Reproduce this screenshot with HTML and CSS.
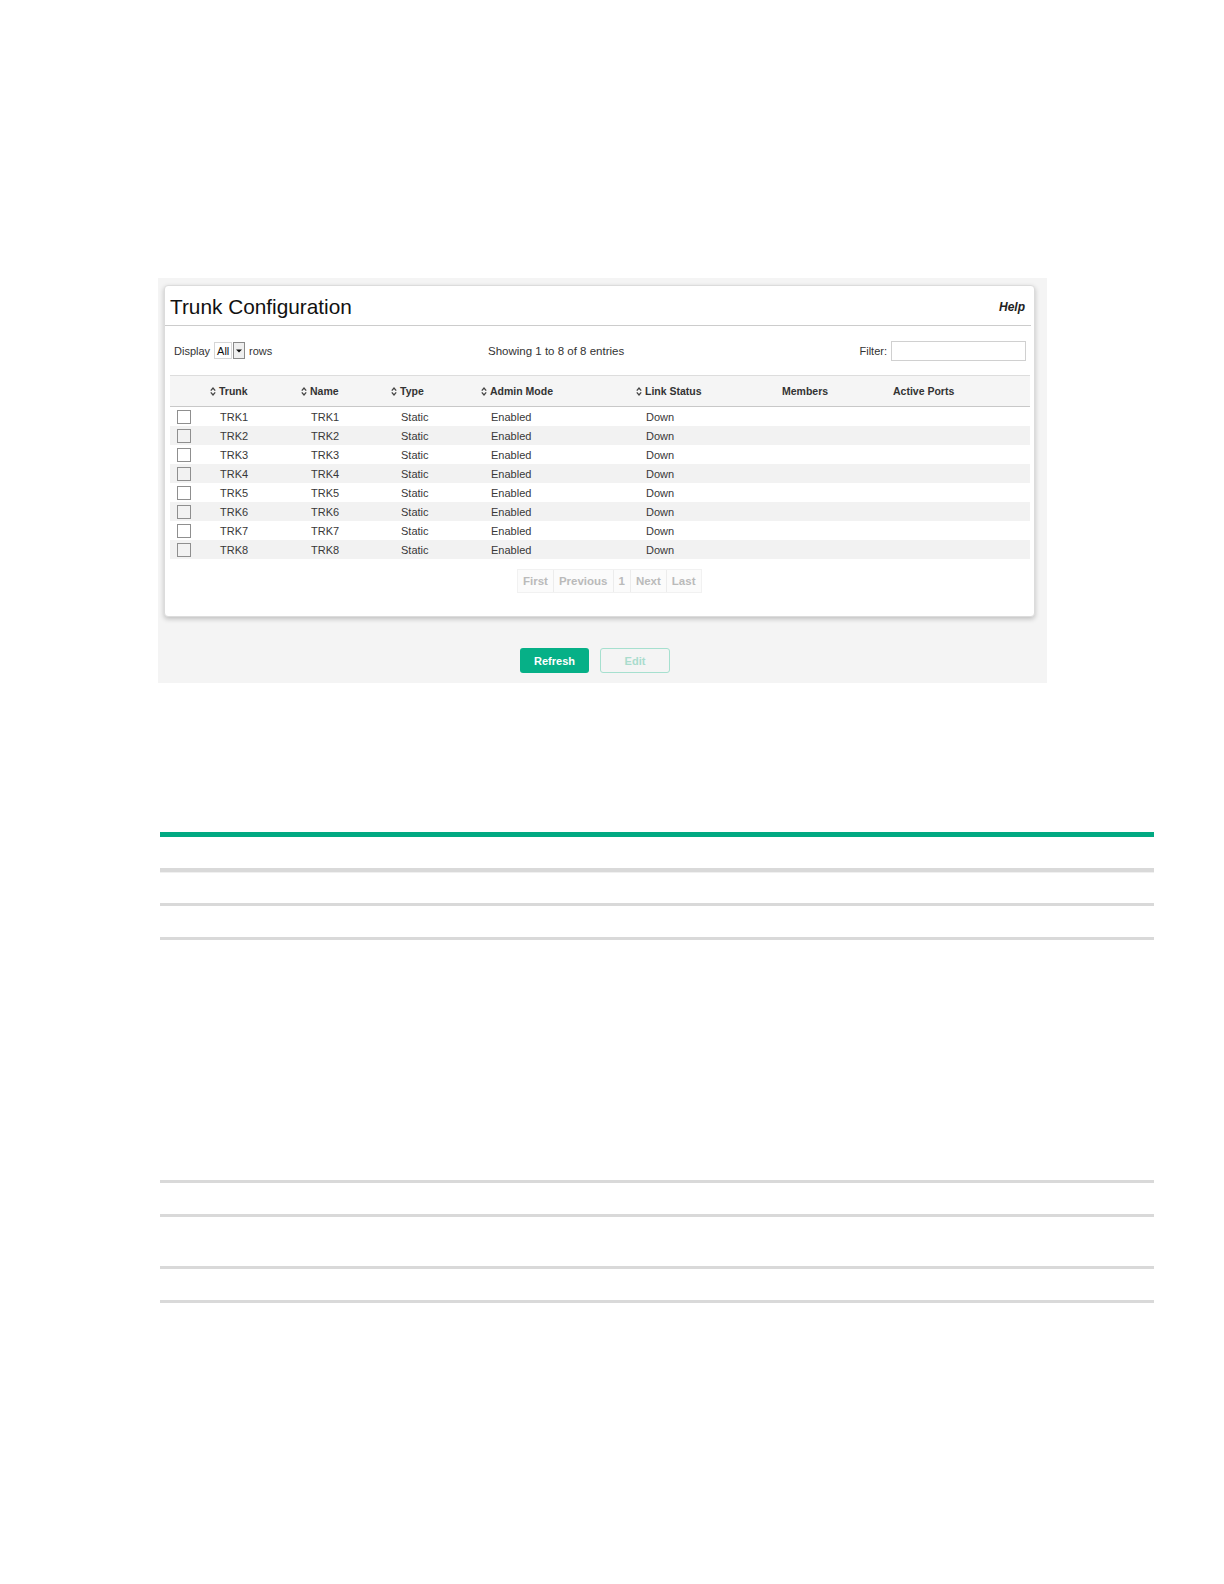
FILE: index.html
```html
<!DOCTYPE html>
<html lang="en">
<head>
<meta charset="utf-8">
<title>Trunk Configuration</title>
<link rel="stylesheet" href="styles.css">
</head>
<body>
<div class="page">
  <div class="frame">
    <div class="panel">
      <div class="titlebar">
        <span class="title">Trunk Configuration</span>
        <span class="help">Help</span>
      </div>
      <div class="toolbar">
        <div class="display">
          <span>Display</span>
          <span class="select"><span class="select-val">All</span><span class="select-arrow"><svg width="6" height="4" viewBox="0 0 6 4"><path d="M0 0.5 H6 L3 3.5 Z" fill="#111"/></svg></span></span>
          <span>rows</span>
        </div>
        <div class="showing">Showing 1 to 8 of 8 entries</div>
        <div class="filter"><span>Filter:</span><span class="filter-input"></span></div>
      </div>
      <div class="table">
        <div class="row head">
          <div class="cell"></div>
          <div class="cell sort"><svg class="sorticon" width="6" height="9" viewBox="0 0 6 9"><path d="M0.8 3.6 L3 1.1 L5.2 3.6 M0.8 5.4 L3 7.9 L5.2 5.4" fill="none" stroke="#444" stroke-width="1.3"/></svg>Trunk</div>
          <div class="cell sort"><svg class="sorticon" width="6" height="9" viewBox="0 0 6 9"><path d="M0.8 3.6 L3 1.1 L5.2 3.6 M0.8 5.4 L3 7.9 L5.2 5.4" fill="none" stroke="#444" stroke-width="1.3"/></svg>Name</div>
          <div class="cell sort"><svg class="sorticon" width="6" height="9" viewBox="0 0 6 9"><path d="M0.8 3.6 L3 1.1 L5.2 3.6 M0.8 5.4 L3 7.9 L5.2 5.4" fill="none" stroke="#444" stroke-width="1.3"/></svg>Type</div>
          <div class="cell sort"><svg class="sorticon" width="6" height="9" viewBox="0 0 6 9"><path d="M0.8 3.6 L3 1.1 L5.2 3.6 M0.8 5.4 L3 7.9 L5.2 5.4" fill="none" stroke="#444" stroke-width="1.3"/></svg>Admin Mode</div>
          <div class="cell sort"><svg class="sorticon" width="6" height="9" viewBox="0 0 6 9"><path d="M0.8 3.6 L3 1.1 L5.2 3.6 M0.8 5.4 L3 7.9 L5.2 5.4" fill="none" stroke="#444" stroke-width="1.3"/></svg>Link Status</div>
          <div class="cell plain">Members</div>
          <div class="cell plain">Active Ports</div>
        </div>
        <div class="row"><div class="cell chk"><span class="box"></span></div><div class="cell">TRK1</div><div class="cell">TRK1</div><div class="cell">Static</div><div class="cell">Enabled</div><div class="cell">Down</div><div class="cell"></div><div class="cell"></div></div>
        <div class="row"><div class="cell chk"><span class="box"></span></div><div class="cell">TRK2</div><div class="cell">TRK2</div><div class="cell">Static</div><div class="cell">Enabled</div><div class="cell">Down</div><div class="cell"></div><div class="cell"></div></div>
        <div class="row"><div class="cell chk"><span class="box"></span></div><div class="cell">TRK3</div><div class="cell">TRK3</div><div class="cell">Static</div><div class="cell">Enabled</div><div class="cell">Down</div><div class="cell"></div><div class="cell"></div></div>
        <div class="row"><div class="cell chk"><span class="box"></span></div><div class="cell">TRK4</div><div class="cell">TRK4</div><div class="cell">Static</div><div class="cell">Enabled</div><div class="cell">Down</div><div class="cell"></div><div class="cell"></div></div>
        <div class="row"><div class="cell chk"><span class="box"></span></div><div class="cell">TRK5</div><div class="cell">TRK5</div><div class="cell">Static</div><div class="cell">Enabled</div><div class="cell">Down</div><div class="cell"></div><div class="cell"></div></div>
        <div class="row"><div class="cell chk"><span class="box"></span></div><div class="cell">TRK6</div><div class="cell">TRK6</div><div class="cell">Static</div><div class="cell">Enabled</div><div class="cell">Down</div><div class="cell"></div><div class="cell"></div></div>
        <div class="row"><div class="cell chk"><span class="box"></span></div><div class="cell">TRK7</div><div class="cell">TRK7</div><div class="cell">Static</div><div class="cell">Enabled</div><div class="cell">Down</div><div class="cell"></div><div class="cell"></div></div>
        <div class="row"><div class="cell chk"><span class="box"></span></div><div class="cell">TRK8</div><div class="cell">TRK8</div><div class="cell">Static</div><div class="cell">Enabled</div><div class="cell">Down</div><div class="cell"></div><div class="cell"></div></div>
      </div>
      <div class="pager-wrap">
        <div class="pager">
          <span class="pg">First</span><span class="pg">Previous</span><span class="pg">1</span><span class="pg">Next</span><span class="pg">Last</span>
        </div>
      </div>
    </div>
    <div class="buttons">
      <span class="btn primary">Refresh</span>
      <span class="btn ghost">Edit</span>
    </div>
  </div>

  <div class="doc-table">
    <div class="rule green"></div>
    <div class="rule thick gap1"></div>
    <div class="rule gap2"></div>
    <div class="rule gap3"></div>
    <div class="rule gap4"></div>
    <div class="rule gap5"></div>
    <div class="rule gap6"></div>
    <div class="rule gap7"></div>
  </div>
</div>
</body>
</html>
```

FILE: styles.css
```css
html, body {
  margin: 0;
  padding: 0;
  background: #ffffff;
}

body {
  font-family: "Liberation Sans", Arial, sans-serif;
  color: #333333;
}

.page {
  padding: 278px 0 0 158px;
}

.frame {
  width: 889px;
  height: 405px;
  box-sizing: border-box;
  background: #f4f4f4;
  padding: 7px 0 0 6px;
}

.panel {
  width: 871px;
  height: 332px;
  box-sizing: border-box;
  background: #ffffff;
  border: 1px solid #dcdcdc;
  border-radius: 4px;
  box-shadow: 0 2px 5px rgba(0, 0, 0, 0.22);
}

.titlebar {
  display: flex;
  justify-content: space-between;
  align-items: center;
  margin-right: 3px;
  padding: 0 6px 0 5px;
  height: 39px;
  border-bottom: 1px solid #cccccc;
}

.title {
  font-size: 20.8px;
  line-height: 24px;
  color: #111111;
  padding-top: 2px;
}

.help {
  font-size: 12px;
  font-weight: bold;
  font-style: italic;
  color: #222222;
  padding-top: 2px;
}

.toolbar {
  display: grid;
  grid-template-columns: 314px 1fr auto;
  align-items: center;
  height: 49px;
  padding: 0 8px 0 9px;
  font-size: 11px;
  color: #333333;
}

.display {
  display: flex;
  align-items: center;
  gap: 4px;
}

.select {
  display: inline-flex;
  align-items: stretch;
  height: 17px;
}

.select-val {
  display: inline-flex;
  align-items: center;
  padding: 0 1px 0 2px;
  width: 13px;
  border: 1px solid #d6d6d6;
  background: #fff;
  color: #111;
}

.select-arrow {
  display: inline-flex;
  align-items: center;
  justify-content: center;
  width: 10px;
  margin-left: 1px;
  border: 1px solid #8a8a8a;
  background: #efefef;
}

.showing {
  font-size: 11.5px;
}

.filter {
  display: flex;
  align-items: center;
  gap: 4px;
}

.filter-input {
  display: inline-block;
  width: 133px;
  height: 18px;
  border: 1px solid #d0d0d0;
  background: #fff;
}

.table {
  margin: 0 4px 0 5px;
}

.row {
  display: grid;
  grid-template-columns: 40px 91px 90px 90px 155px 137px 111px 146px;
  height: 19px;
  align-items: center;
  font-size: 11px;
  color: #383838;
}

.row:nth-child(odd) {
  background: #f2f2f2;
}

.row .cell {
  padding-left: 10px;
  white-space: nowrap;
}

.row.head {
  height: 30px;
  background: #f5f5f5;
  border-top: 1px solid #dddddd;
  border-bottom: 1px solid #c8c8c8;
  font-size: 10.5px;
  font-weight: bold;
  color: #333333;
}

.row.head .cell.sort {
  padding-left: 0;
  display: flex;
  align-items: center;
}

.row.head .cell.plain {
  padding-left: 9px;
}

.sorticon {
  margin-right: 3px;
  flex: none;
}

.row .cell.chk {
  padding-left: 7px;
  display: flex;
  align-items: center;
}

.box {
  display: inline-block;
  width: 12px;
  height: 12px;
  border: 1px solid #8f8f8f;
  background: transparent;
}

.pager-wrap {
  padding: 10px 0 0 352px;
}

.pager {
  display: inline-flex;
  height: 24px;
  background: #fbfbfb;
  border: 1px solid #f1f1f1;
  box-sizing: border-box;
}

.pg {
  display: inline-flex;
  align-items: center;
  padding: 0 5px;
  font-size: 11.5px;
  font-weight: bold;
  color: #bababa;
  border-left: 1px solid #ececec;
}

.pg:first-child {
  border-left: none;
}

.buttons {
  display: flex;
  gap: 11px;
  padding: 31px 0 0 356px;
}

.btn {
  display: inline-flex;
  align-items: center;
  justify-content: center;
  box-sizing: border-box;
  height: 25px;
  border-radius: 3px;
  font-size: 11px;
  font-weight: bold;
}

.btn.primary {
  width: 69px;
  background: #06b087;
  color: #ffffff;
}

.btn.ghost {
  width: 70px;
  border: 1px solid #a6e0cf;
  color: #a9dccd;
  background: transparent;
}

.doc-table {
  width: 994px;
  margin-left: 2px;
  padding-top: 149px;
}

.rule {
  height: 3px;
  background: #d9d9d9;
}

.rule.green {
  height: 5px;
  background: #01a982;
}

.rule.thick {
  height: 4px;
  border-bottom: 1px solid #f0f0f0;
}

.gap1 { margin-top: 31px; }
.gap2 { margin-top: 30px; }
.gap3 { margin-top: 31px; }
.gap4 { margin-top: 240px; }
.gap5 { margin-top: 31px; }
.gap6 { margin-top: 49px; }
.gap7 { margin-top: 31px; }
```
